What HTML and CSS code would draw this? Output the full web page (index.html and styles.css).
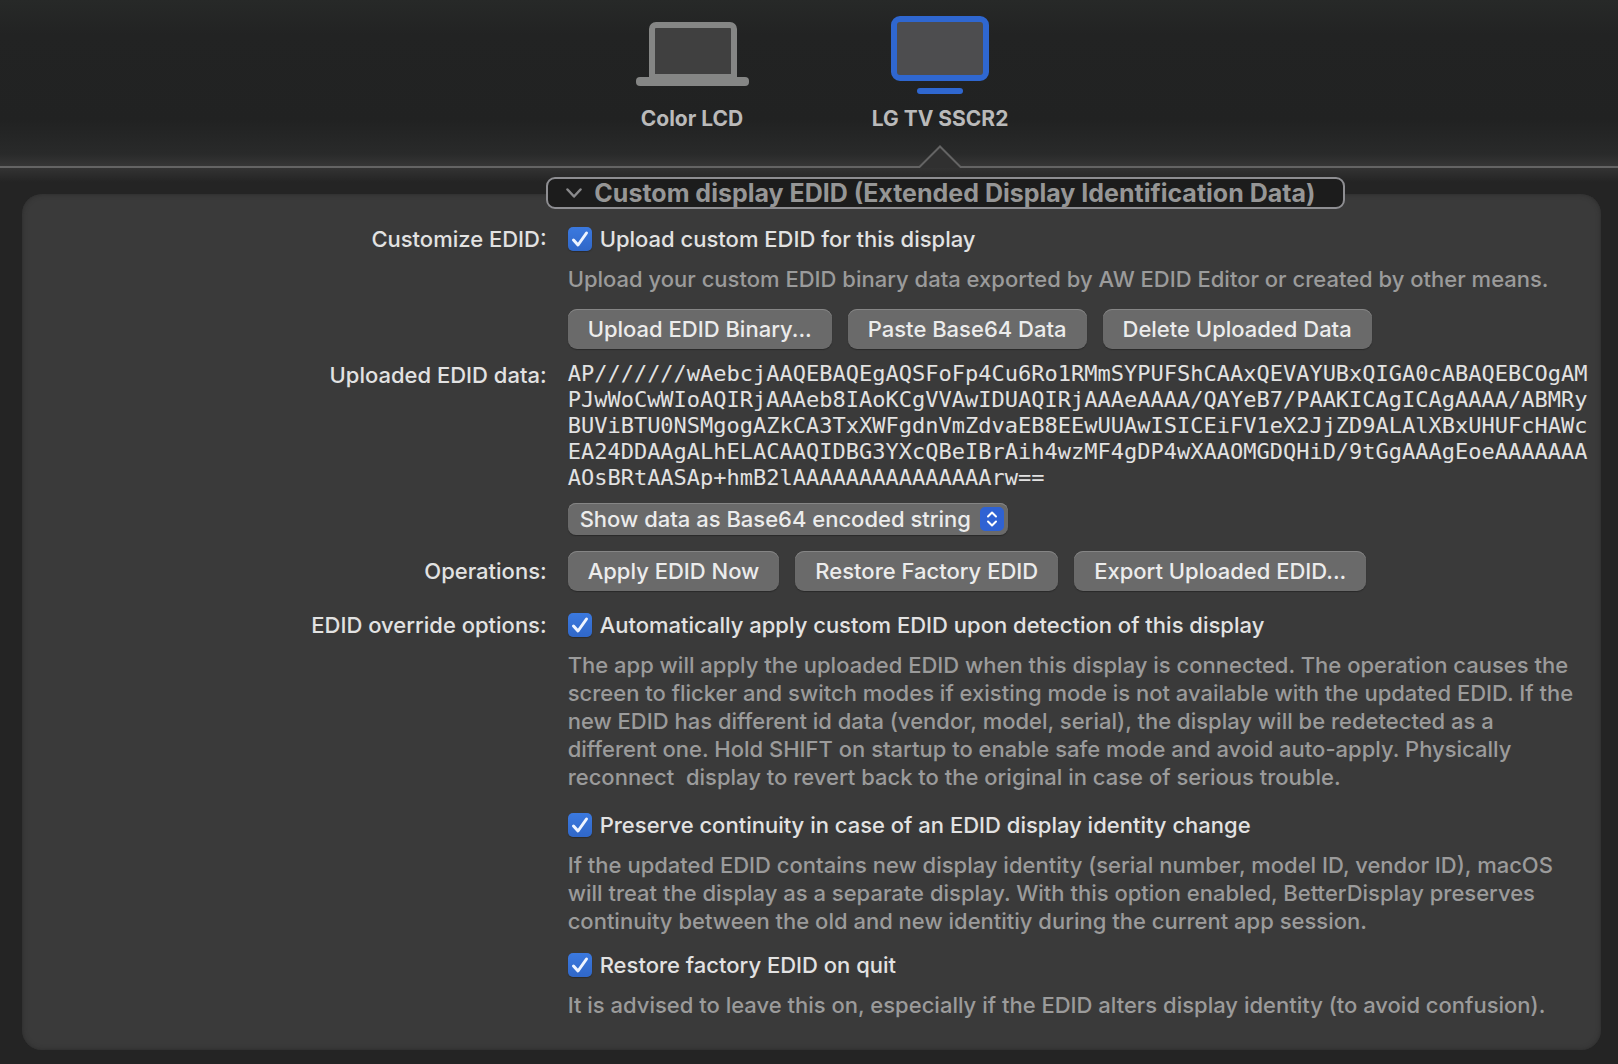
FILE: index.html
```html
<!DOCTYPE html>
<html lang="en">
<head>
    <meta charset="UTF-8">
    <meta name="viewport" content="width=device-width, initial-scale=1.0">
    <title>Displays</title>
    <link rel="stylesheet" href="styles.css">
</head>
<body>
    <header class="toolbar">
        <button type="button" class="tab">
            <svg class="tab-icon" width="114" height="80" viewBox="0 0 114 80">
                <path d="M17 62V14a4 4 0 0 1 4-4h74a4 4 0 0 1 4 4v48z" fill="#404040" stroke="#858685" stroke-width="6"/>
                <rect x="1" y="62" width="113" height="9" rx="4" fill="#858685"/>
            </svg>
            <span>Color LCD</span>
        </button>
        <button type="button" class="tab">
            <svg class="tab-icon" width="114" height="80" viewBox="0 0 114 80">
                <rect x="11" y="4" width="92" height="59" rx="6" fill="#4d4d4f" stroke="#2f67d0" stroke-width="6"/>
                <rect x="34" y="73" width="46" height="6" rx="3" fill="#2f67d0"/>
            </svg>
            <span>LG TV SSCR2</span>
            <svg class="tab-arrow" width="44" height="24" viewBox="0 0 44 24">
                <path d="M0 24L22 2l22 22z" fill="#303030"/>
                <path d="M0 23H1.500L22 2.500L42.500 23H44" fill="none" stroke="#646464" stroke-width="2"/>
            </svg>
        </button>
    </header>

    <main>
        <section class="panel">
            <div class="panel-header">
                <button type="button" class="panel-title">
                    <svg width="16" height="10" viewBox="0 0 16 10">
                        <path d="M1.500 1.500L8 8.500L14.500 1.500" fill="none" stroke="#8a8a8c" stroke-width="2.500" stroke-linecap="round" stroke-linejoin="round"/>
                    </svg>
                    Custom display EDID (Extended Display Identification Data)
                </button>
            </div>

            <div class="row">
                <div class="label">Customize EDID:</div>
                <div class="field">
                    <label class="check"><input type="checkbox" checked> Upload custom EDID for this display</label>
                    <p class="hint">Upload your custom EDID binary data exported by AW EDID Editor or created by other means.</p>
                    <div class="buttons">
                        <button type="button" class="btn">Upload EDID Binary...</button>
                        <button type="button" class="btn">Paste Base64 Data</button>
                        <button type="button" class="btn">Delete Uploaded Data</button>
                    </div>
                </div>
            </div>

            <div class="row data-row">
                <label class="label" for="format">Uploaded EDID data:</label>
                <div class="field">
                    <p class="edid">AP///////wAebcjAAQEBAQEgAQSFoFp4Cu6Ro1RMmSYPUFShCAAxQEVAYUBxQIGA0cABAQEBCOgAM<br>PJwWoCwWIoAQIRjAAAeb8IAoKCgVVAwIDUAQIRjAAAeAAAA/QAYeB7/PAAKICAgICAgAAAA/ABMRy<br>BUViBTU0NSMgogAZkCA3TxXWFgdnVmZdvaEB8EEwUUAwISICEiFV1eX2JjZD9ALAlXBxUHUFcHAWc<br>EA24DDAAgALhELACAAQIDBG3YXcQBeIBrAih4wzMF4gDP4wXAAOMGDQHiD/9tGgAAAgEoeAAAAAAA<br>AOsBRtAASAp+hmB2lAAAAAAAAAAAAAAArw==</p>
                    <div class="select">
                        <select id="format">
                            <option>Show data as Base64 encoded string</option>
                        </select>
                        <svg width="24" height="24" viewBox="0 0 24 24">
                            <rect width="24" height="24" rx="5" fill="#2f62d3"/>
                            <path d="M8 9.500L12 5.500L16 9.500M8 14.500L12 18.500L16 14.500" fill="none" stroke="#fff" stroke-width="2" stroke-linecap="round" stroke-linejoin="round"/>
                        </svg>
                    </div>
                </div>
            </div>

            <div class="row ops-row">
                <div class="label">Operations:</div>
                <div class="buttons">
                    <button type="button" class="btn">Apply EDID Now</button>
                    <button type="button" class="btn">Restore Factory EDID</button>
                    <button type="button" class="btn">Export Uploaded EDID...</button>
                </div>
            </div>

            <div class="row options-row">
                <div class="label">EDID override options:</div>
                <div class="field">
                    <label class="check"><input type="checkbox" checked> Automatically apply custom EDID upon detection of this display</label>
                    <p class="hint">The app will apply the uploaded EDID when this display is connected. The operation causes the<br>screen to flicker and switch modes if existing mode is not available with the updated EDID. If the<br>new EDID has different id data (vendor, model, serial), the display will be redetected as a<br>different one. Hold SHIFT on startup to enable safe mode and avoid auto-apply. Physically<br>reconnect&nbsp; display to revert back to the original in case of serious trouble.</p>
                    <label class="check"><input type="checkbox" checked> Preserve continuity in case of an EDID display identity change</label>
                    <p class="hint">If the updated EDID contains new display identity (serial number, model ID, vendor ID), macOS<br>will treat the display as a separate display. With this option enabled, BetterDisplay preserves<br>continuity between the old and new identitiy during the current app session.</p>
                    <label class="check"><input type="checkbox" checked> Restore factory EDID on quit</label>
                    <p class="hint">It is advised to leave this on, especially if the EDID alters display identity (to avoid confusion).</p>
                </div>
            </div>
        </section>
    </main>
</body>
</html>
```
FILE: styles.css
```css
* {
    box-sizing: border-box;
}
body {
    margin: 0;
    min-height: 100vh;
    background-color: #242424;
    color: #e2e2e2;
    font-family: Inter, "Liberation Sans", sans-serif;
    font-size: 22px;
    font-weight: 500;
    line-height: 28px;
}
button, select, input {
    margin: 0;
    font: inherit;
    color: inherit;
}
p {
    margin: 0;
}

/* Display picker */
.toolbar {
    display: flex;
    justify-content: center;
    height: 168px;
    padding-left: 14px;
    border-bottom: 2px solid #646464;
    background: linear-gradient(#272928, #222323 35px, #212222 120px, #292a2a 154px, #363636);
}
.tab {
    position: relative;
    display: flex;
    flex-direction: column;
    align-items: center;
    width: 248px;
    padding: 15px 0 0;
    border: none;
    background: none;
    color: #bababa;
    font-size: 21px;
    font-weight: 700;
}
.tab-icon {
    margin-bottom: 10px;
}
.tab-arrow {
    position: absolute;
    bottom: -2px;
    left: calc(50% - 22px);
}

/* Settings panel */
main {
    padding: 26px 17px 14px 22px;
    background: linear-gradient(#333, #242424 14px);
}
.panel {
    display: flow-root;
    padding-bottom: 31px;
    border-radius: 20px;
    background-color: #3a3a3a;
    box-shadow: inset 0 0 5px #2b2b2b;
}
.panel-header {
    display: grid;
    grid-template-columns: 1fr 2fr;
    margin-top: -17px;
    padding-right: 6px;
    margin-bottom: 16px;
}
.panel-title {
    grid-column: 2;
    justify-self: start;
    display: flex;
    align-items: center;
    gap: 12px;
    height: 32px;
    padding: 0 28px 0 18px;
    border: 2px solid #8e8e92;
    border-radius: 9px;
    background-color: #1c1c1c;
    color: #969696;
    font-size: 25px;
    font-weight: 700;
    white-space: nowrap;
}
.row {
    display: grid;
    grid-template-columns: minmax(0, 1fr) minmax(0, 2fr);
    column-gap: 21px;
    padding: 0 10px 0 13px;
}
.label {
    text-align: right;
}
.check {
    display: flex;
    align-items: center;
    gap: 8px;
}
.check input {
    appearance: none;
    width: 24px;
    height: 24px;
    border-radius: 5px;
    background: url("data:image/svg+xml,%3Csvg xmlns='http://www.w3.org/2000/svg' viewBox='0 0 24 24'%3E%3Cpath d='M5.500 13L10 18L18.500 6' fill='none' stroke='%23eef4ff' stroke-width='3' stroke-linecap='round' stroke-linejoin='round'/%3E%3C/svg%3E"), linear-gradient(#3b79df, #3067c8);
    box-shadow: 0 1px 1px #2c2c2c;
}
.hint {
    margin-top: 12px;
    color: #9b9b9b;
    white-space: nowrap;
}
.hint + .check {
    margin-top: 20px;
}
.hint + .check:last-of-type {
    margin-top: 16px;
}
.buttons {
    display: flex;
    gap: 16px;
}
.hint + .buttons {
    margin-top: 16px;
}
.btn {
    height: 40px;
    padding: 0 20px;
    border: none;
    border-radius: 9px;
    background-color: #6a6a6a;
    box-shadow: inset 0 1px #858585, 0 1px 1px #2a2a2a;
    color: #ececec;
    white-space: nowrap;
}
.data-row {
    margin-top: 12px;
}
.edid {
    font-family: "DejaVu Sans Mono", monospace;
    line-height: 26px;
}
.select {
    position: relative;
    width: fit-content;
    margin-top: 12px;
}
.select select {
    display: block;
    appearance: none;
    height: 32px;
    padding: 0 36px 0 12px;
    border: none;
    border-radius: 8px;
    background-color: #6a6a6a;
    box-shadow: inset 0 1px #858585, 0 1px 1px #2a2a2a;
    color: #ececec;
}
.select svg {
    position: absolute;
    top: 4px;
    right: 4px;
    pointer-events: none;
}
.ops-row {
    align-items: center;
    margin-top: 16px;
}
.options-row {
    margin-top: 20px;
}
```
